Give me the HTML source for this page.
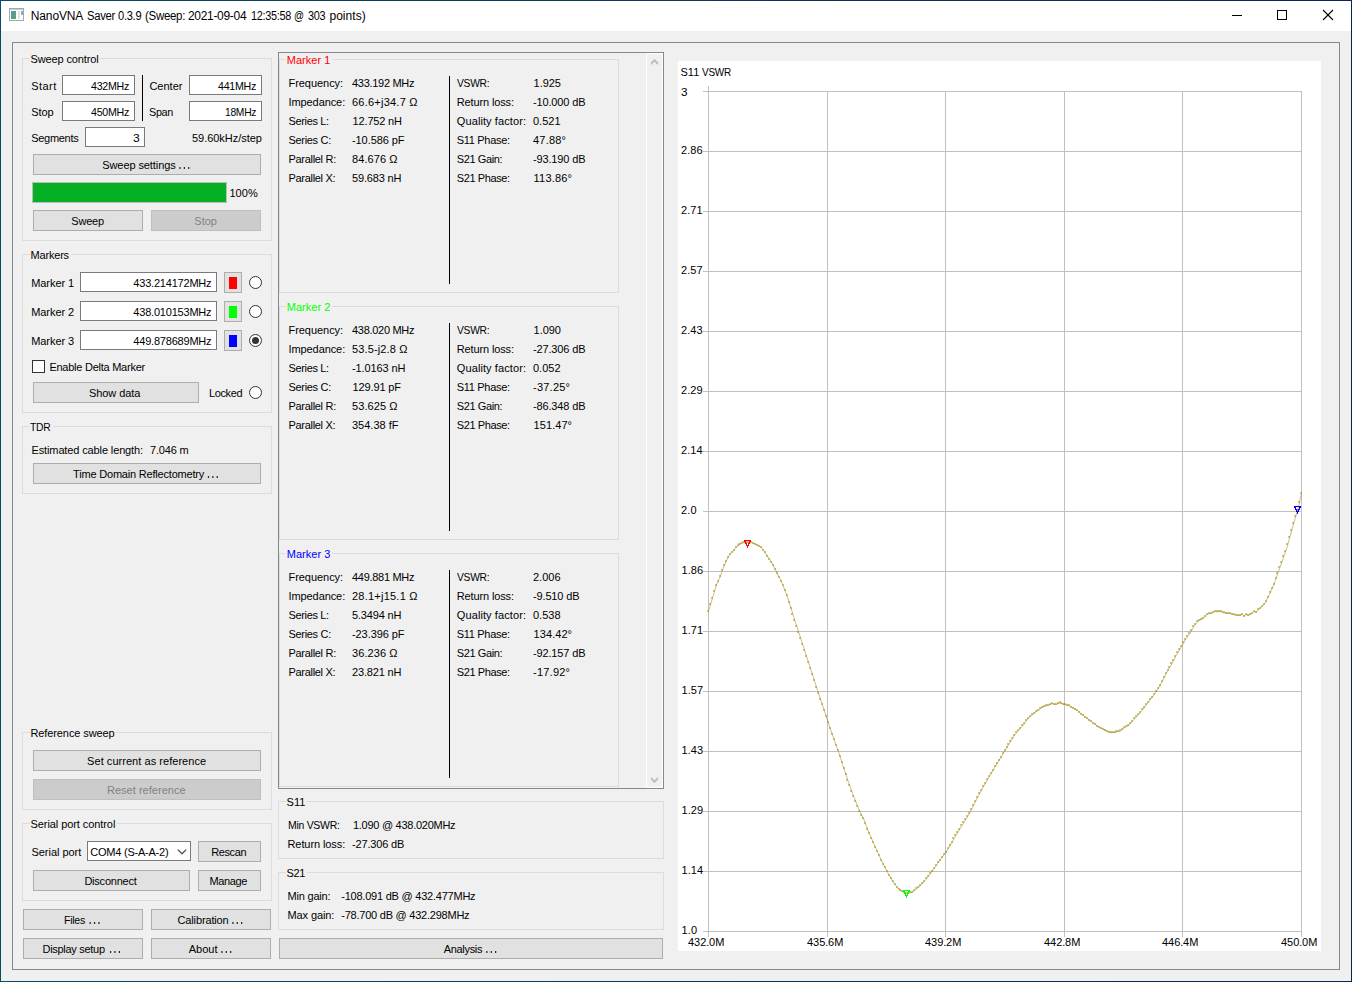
<!DOCTYPE html>
<html><head><meta charset="utf-8"><title>NanoVNA Saver</title>
<style>
html,body{margin:0;padding:0;}
body{width:1352px;height:982px;position:relative;overflow:hidden;background:#f0f0f0;font-family:"Liberation Sans",sans-serif;font-size:11px;color:#000;}
div,span{position:absolute;box-sizing:content-box;}
.t{white-space:pre;line-height:13px;height:13px;transform-origin:0 0;}
.gb{border:1px solid #dcdcdc;}
.gap{background:#f0f0f0;}
.btn{background:#e1e1e1;border:1px solid #adadad;}
.btn.dis{background:#cccccc;border-color:#bfbfbf;}
.inp{background:#fff;border:1px solid #7a7a7a;}
.frame{border:1px solid #828790;}
.rad{width:11px;height:11px;border:1px solid #333;border-radius:50%;background:#fff;}
.vl{background:#000;width:1px;}
svg{position:absolute;left:0;top:0;}

</style></head>
<body>
<div class="" style="left:0px;top:0px;width:1352px;height:1px;background:linear-gradient(to right,#0c4866,#0a2650);"></div>
<div class="" style="left:0px;top:981px;width:1352px;height:1px;background:linear-gradient(to right,#0a4a66,#0a2650);"></div>
<div class="" style="left:0px;top:0px;width:1px;height:982px;background:#0a4a66;"></div>
<div class="" style="left:1351px;top:0px;width:1px;height:982px;background:#0a2650;"></div>
<div class="" style="left:1px;top:1px;width:1350px;height:30px;background:#fff;"></div>
<svg width="40" height="31" viewBox="0 0 40 31"><defs><linearGradient id="ig" x1="0" y1="0" x2="1" y2="1"><stop offset="0" stop-color="#5d8fc4"/><stop offset="1" stop-color="#4fae58"/></linearGradient></defs><rect x="9.5" y="8.5" width="14" height="12" fill="#fff" stroke="#a4a8ae" stroke-width="1"/><rect x="10" y="9" width="13" height="1" fill="#c9ccd1"/><rect x="11" y="11" width="5" height="8" fill="url(#ig)"/><rect x="18" y="11" width="2" height="8" fill="#e4e4e4"/><rect x="21" y="11" width="2" height="4" fill="#7fb0c8"/></svg>
<span class="t " style="left:30.80px;top:10px;letter-spacing:-0.143px;font-size:12px;">NanoVNA</span>
<span class="t " style="left:86.50px;top:10px;letter-spacing:-0.300px;transform:scaleX(0.9353);font-size:12px;">Saver</span>
<span class="t " style="left:117.50px;top:10px;letter-spacing:-0.300px;transform:scaleX(0.9259);font-size:12px;">0.3.9</span>
<span class="t " style="left:144.70px;top:10px;letter-spacing:-0.300px;transform:scaleX(0.9569);font-size:12px;">(Sweep:</span>
<span class="t " style="left:187.90px;top:10px;letter-spacing:-0.298px;font-size:12px;">2021-09-04</span>
<span class="t " style="left:250.60px;top:10px;letter-spacing:-0.300px;transform:scaleX(0.9056);font-size:12px;">12:35:58</span>
<span class="t " style="left:294.40px;top:10px;letter-spacing:0.000px;transform:scaleX(0.8210);font-size:12px;">@</span>
<span class="t " style="left:308.00px;top:10px;letter-spacing:-0.300px;transform:scaleX(0.9063);font-size:12px;">303</span>
<span class="t " style="left:329.40px;top:10px;letter-spacing:0.063px;font-size:12px;">points)</span>
<svg width="1352" height="31" viewBox="0 0 1352 31" shape-rendering="crispEdges"><rect x="1232" y="15" width="10" height="1" fill="#000"/><rect x="1277.5" y="10.5" width="9" height="9" fill="none" stroke="#000" stroke-width="1"/><g shape-rendering="auto" stroke="#000" stroke-width="1.1"><line x1="1323" y1="10" x2="1333" y2="20"/><line x1="1333" y1="10" x2="1323" y2="20"/></g></svg>
<div class="frame" style="left:12px;top:42px;width:1326px;height:926px;"></div>
<div class="gb" style="left:22px;top:58px;width:248px;height:181px;"></div>
<div class="gap" style="left:29.7px;top:56px;width:70.7px;height:5px"></div>
<span class="t " style="left:30.60px;top:53px;letter-spacing:-0.134px;">Sweep control</span>
<span class="t " style="left:31.25px;top:80px;letter-spacing:0.430px;">Start</span>
<div class="inp" style="left:62px;top:75px;width:71px;height:18px;"></div>
<span class="t " style="left:91.40px;top:80px;letter-spacing:-0.300px;transform:scaleX(0.9681);">432MHz</span>
<span class="t " style="left:31.25px;top:106px;letter-spacing:-0.060px;">Stop</span>
<div class="inp" style="left:62px;top:101px;width:71px;height:18px;"></div>
<span class="t " style="left:91.40px;top:106px;letter-spacing:-0.300px;transform:scaleX(0.9681);">450MHz</span>
<div class="vl" style="left:142px;top:75px;width:1px;height:46px;"></div>
<span class="t " style="left:149.40px;top:80px;letter-spacing:0.016px;">Center</span>
<div class="inp" style="left:189px;top:75px;width:71px;height:18px;"></div>
<span class="t " style="left:218.40px;top:80px;letter-spacing:-0.300px;transform:scaleX(0.9681);">441MHz</span>
<span class="t " style="left:149.40px;top:106px;letter-spacing:-0.300px;transform:scaleX(0.9802);">Span</span>
<div class="inp" style="left:189px;top:101px;width:71px;height:18px;"></div>
<span class="t " style="left:225.20px;top:106px;letter-spacing:-0.300px;transform:scaleX(0.9334);">18MHz</span>
<span class="t " style="left:31.25px;top:132px;letter-spacing:-0.297px;">Segments</span>
<div class="inp" style="left:85px;top:127px;width:58px;height:18px;"></div>
<span class="t " style="left:132.88px;top:132px;letter-spacing:0.000px;transform:scaleX(1.0980);">3</span>
<span class="t " style="left:192.00px;top:132px;letter-spacing:-0.039px;">59.60kHz/step</span>
<div class="btn" style="left:33px;top:154px;width:226px;height:19px;"></div>
<span class="t " style="left:102.25px;top:159.0px;letter-spacing:-0.088px;">Sweep settings</span>
<div class="" style="left:32px;top:182px;width:193px;height:19px;background:#06b025;border:1px solid #bcbcbc;"></div>
<span class="t " style="left:229.40px;top:187px;letter-spacing:0.107px;">100%</span>
<div class="btn" style="left:33px;top:210px;width:108px;height:19px;"></div>
<span class="t " style="left:71.30px;top:215.0px;letter-spacing:-0.208px;">Sweep</span>
<div class="btn dis" style="left:151px;top:210px;width:108px;height:19px;"></div>
<span class="t " style="left:194.35px;top:215.0px;letter-spacing:-0.043px;color:#838383;">Stop</span>
<div class="gb" style="left:22px;top:254px;width:248px;height:157px;"></div>
<div class="gap" style="left:29.6px;top:252px;width:41.2px;height:5px"></div>
<span class="t " style="left:30.50px;top:249px;letter-spacing:-0.187px;">Markers</span>
<span class="t " style="left:31.25px;top:277px;letter-spacing:-0.079px;">Marker 1</span>
<div class="inp" style="left:80px;top:272px;width:135px;height:18px;"></div>
<span class="t " style="left:133.30px;top:277px;letter-spacing:-0.202px;">433.214172MHz</span>
<div class="btn" style="left:224px;top:272px;width:16px;height:19px;"></div>
<div class="" style="left:229px;top:277px;width:8px;height:12px;background:#ff0000;"></div>
<div class="rad" style="left:249px;top:276px;width:11px;height:11px;"></div>
<span class="t " style="left:31.25px;top:306px;letter-spacing:-0.079px;">Marker 2</span>
<div class="inp" style="left:80px;top:301px;width:135px;height:18px;"></div>
<span class="t " style="left:133.30px;top:306px;letter-spacing:-0.202px;">438.010153MHz</span>
<div class="btn" style="left:224px;top:301px;width:16px;height:19px;"></div>
<div class="" style="left:229px;top:306px;width:8px;height:12px;background:#00ff00;"></div>
<div class="rad" style="left:249px;top:305px;width:11px;height:11px;"></div>
<span class="t " style="left:31.25px;top:335px;letter-spacing:-0.079px;">Marker 3</span>
<div class="inp" style="left:80px;top:330px;width:135px;height:18px;"></div>
<span class="t " style="left:133.30px;top:335px;letter-spacing:-0.202px;">449.878689MHz</span>
<div class="btn" style="left:224px;top:330px;width:16px;height:19px;"></div>
<div class="" style="left:229px;top:335px;width:8px;height:12px;background:#0000ff;"></div>
<div class="rad" style="left:249px;top:334px;width:11px;height:11px;"></div>
<div class="" style="left:252px;top:337px;width:7px;height:7px;background:#333;border-radius:50%;"></div>
<div class="" style="left:32px;top:360px;width:11px;height:11px;background:#fff;border:1px solid #333;"></div>
<span class="t " style="left:49.40px;top:361px;letter-spacing:-0.248px;">Enable Delta Marker</span>
<div class="btn" style="left:33px;top:382px;width:164px;height:19px;"></div>
<span class="t " style="left:89.00px;top:387.0px;letter-spacing:-0.072px;">Show data</span>
<span class="t " style="left:209.00px;top:387px;letter-spacing:-0.394px;">Locked</span>
<div class="rad" style="left:249px;top:386px;width:11px;height:11px;"></div>
<div class="gb" style="left:22px;top:426px;width:248px;height:66px;"></div>
<div class="gap" style="left:29.4px;top:424px;width:23.2px;height:5px"></div>
<span class="t " style="left:30.30px;top:421px;letter-spacing:-0.300px;transform:scaleX(0.9359);">TDR</span>
<span class="t " style="left:31.50px;top:444px;letter-spacing:-0.125px;">Estimated cable length:</span>
<span class="t " style="left:150.00px;top:444px;letter-spacing:-0.175px;">7.046 m</span>
<div class="btn" style="left:33px;top:463px;width:226px;height:19px;"></div>
<span class="t " style="left:73.10px;top:468.0px;letter-spacing:-0.194px;">Time Domain Reflectometry</span>
<div class="gb" style="left:22px;top:732px;width:248px;height:76px;"></div>
<div class="gap" style="left:29.6px;top:730px;width:86.7px;height:5px"></div>
<span class="t " style="left:30.50px;top:727px;letter-spacing:-0.107px;">Reference sweep</span>
<div class="btn" style="left:33px;top:750px;width:226px;height:19px;"></div>
<span class="t " style="left:87.10px;top:755.0px;letter-spacing:0.043px;">Set current as reference</span>
<div class="btn dis" style="left:33px;top:779px;width:226px;height:19px;"></div>
<span class="t " style="left:106.95px;top:784.0px;letter-spacing:0.031px;color:#838383;">Reset reference</span>
<div class="gb" style="left:22px;top:823px;width:248px;height:76px;"></div>
<div class="gap" style="left:29.6px;top:821px;width:87.5px;height:5px"></div>
<span class="t " style="left:30.50px;top:818px;letter-spacing:-0.076px;">Serial port control</span>
<span class="t " style="left:31.50px;top:846px;letter-spacing:-0.043px;">Serial port</span>
<div class="inp" style="left:87px;top:841px;width:102px;height:18px;"></div>
<span class="t " style="left:90.25px;top:846px;letter-spacing:-0.225px;">COM4 (S-A-A-2)</span>
<svg width="1352" height="982" viewBox="0 0 1352 982"><polyline points="177.8,849.6 182,853.8 186.2,849.6" fill="none" stroke="#4d4d4d" stroke-width="1.25"/></svg>
<div class="btn" style="left:198px;top:841px;width:61px;height:19px;"></div>
<span class="t " style="left:211.20px;top:846.0px;letter-spacing:-0.380px;">Rescan</span>
<div class="btn" style="left:33px;top:870px;width:155px;height:19px;"></div>
<span class="t " style="left:84.40px;top:875.0px;letter-spacing:-0.223px;">Disconnect</span>
<div class="btn" style="left:198px;top:870px;width:61px;height:19px;"></div>
<span class="t " style="left:209.40px;top:875.0px;letter-spacing:-0.330px;">Manage</span>
<div class="btn" style="left:23px;top:909px;width:118px;height:19px;"></div>
<span class="t " style="left:64.40px;top:914.0px;letter-spacing:-0.300px;transform:scaleX(0.9628);">Files</span>
<div class="btn" style="left:151px;top:909px;width:118px;height:19px;"></div>
<span class="t " style="left:177.50px;top:914.0px;letter-spacing:-0.138px;">Calibration</span>
<div class="btn" style="left:23px;top:938px;width:118px;height:19px;"></div>
<span class="t " style="left:42.50px;top:943.0px;letter-spacing:-0.294px;">Display setup</span>
<div class="btn" style="left:151px;top:938px;width:118px;height:19px;"></div>
<span class="t " style="left:188.75px;top:943.0px;letter-spacing:0.000px;">About</span>
<div class="btn" style="left:279px;top:938px;width:382px;height:19px;"></div>
<span class="t " style="left:443.75px;top:943.0px;letter-spacing:-0.316px;">Analysis</span>
<div class="frame" style="left:278px;top:52px;width:384px;height:735px;"></div>
<div class="" style="left:646px;top:53px;width:15px;height:733px;border:1px solid #fff;"></div>
<svg width="1352" height="982" viewBox="0 0 1352 982"><g fill="#b7b7b7"><polygon points="651,65 651,62.6 654.5,59 658,62.6 658,65 654.5,61.6"/><polygon points="651,777 651,779.4 654.5,783 658,779.4 658,777 654.5,780.4"/></g></svg>
<div class="gb" style="left:279px;top:59px;width:338px;height:232px;"></div>
<div class="gap" style="left:285.8px;top:57px;width:46.2px;height:5px"></div>
<span class="t " style="left:286.70px;top:54px;letter-spacing:0.029px;color:#ff0000;">Marker 1</span>
<div class="vl" style="left:449px;top:76px;width:1px;height:208px;"></div>
<span class="t " style="left:288.50px;top:77px;letter-spacing:-0.048px;">Frequency:</span>
<span class="t " style="left:352.00px;top:77px;letter-spacing:-0.293px;">433.192 MHz</span>
<span class="t " style="left:456.80px;top:77px;letter-spacing:-0.300px;transform:scaleX(0.9337);">VSWR:</span>
<span class="t " style="left:533.60px;top:77px;letter-spacing:-0.033px;">1.925</span>
<span class="t " style="left:288.50px;top:96px;letter-spacing:-0.087px;">Impedance:</span>
<span class="t " style="left:352.00px;top:96px;letter-spacing:0.230px;">66.6+j34.7 Ω</span>
<span class="t " style="left:456.80px;top:96px;letter-spacing:-0.135px;">Return loss:</span>
<span class="t " style="left:533.00px;top:96px;letter-spacing:-0.147px;">-10.000 dB</span>
<span class="t " style="left:288.50px;top:115px;letter-spacing:-0.351px;">Series L:</span>
<span class="t " style="left:352.60px;top:115px;letter-spacing:-0.170px;">12.752 nH</span>
<span class="t " style="left:456.80px;top:115px;letter-spacing:0.096px;">Quality factor:</span>
<span class="t " style="left:533.00px;top:115px;letter-spacing:-0.008px;">0.521</span>
<span class="t " style="left:288.50px;top:134px;letter-spacing:-0.317px;">Series C:</span>
<span class="t " style="left:352.00px;top:134px;letter-spacing:-0.078px;">-10.586 pF</span>
<span class="t " style="left:456.80px;top:134px;letter-spacing:-0.318px;">S11 Phase:</span>
<span class="t " style="left:533.00px;top:134px;letter-spacing:0.214px;">47.88°</span>
<span class="t " style="left:288.50px;top:153px;letter-spacing:-0.304px;">Parallel R:</span>
<span class="t " style="left:352.00px;top:153px;letter-spacing:0.083px;">84.676 Ω</span>
<span class="t " style="left:456.80px;top:153px;letter-spacing:-0.403px;">S21 Gain:</span>
<span class="t " style="left:533.00px;top:153px;letter-spacing:-0.147px;">-93.190 dB</span>
<span class="t " style="left:288.50px;top:172px;letter-spacing:-0.303px;">Parallel X:</span>
<span class="t " style="left:352.00px;top:172px;letter-spacing:-0.157px;">59.683 nH</span>
<span class="t " style="left:456.80px;top:172px;letter-spacing:-0.408px;">S21 Phase:</span>
<span class="t " style="left:533.60px;top:172px;letter-spacing:0.195px;">113.86°</span>
<div class="gb" style="left:279px;top:306px;width:338px;height:232px;"></div>
<div class="gap" style="left:285.8px;top:304px;width:46.2px;height:5px"></div>
<span class="t " style="left:286.70px;top:301px;letter-spacing:0.029px;color:#00ff00;">Marker 2</span>
<div class="vl" style="left:449px;top:323px;width:1px;height:208px;"></div>
<span class="t " style="left:288.50px;top:324px;letter-spacing:-0.048px;">Frequency:</span>
<span class="t " style="left:352.00px;top:324px;letter-spacing:-0.293px;">438.020 MHz</span>
<span class="t " style="left:456.80px;top:324px;letter-spacing:-0.300px;transform:scaleX(0.9337);">VSWR:</span>
<span class="t " style="left:533.60px;top:324px;letter-spacing:-0.033px;">1.090</span>
<span class="t " style="left:288.50px;top:343px;letter-spacing:-0.087px;">Impedance:</span>
<span class="t " style="left:352.00px;top:343px;letter-spacing:0.141px;">53.5-j2.8 Ω</span>
<span class="t " style="left:456.80px;top:343px;letter-spacing:-0.135px;">Return loss:</span>
<span class="t " style="left:533.00px;top:343px;letter-spacing:-0.147px;">-27.306 dB</span>
<span class="t " style="left:288.50px;top:362px;letter-spacing:-0.351px;">Series L:</span>
<span class="t " style="left:352.00px;top:362px;letter-spacing:-0.103px;">-1.0163 nH</span>
<span class="t " style="left:456.80px;top:362px;letter-spacing:0.096px;">Quality factor:</span>
<span class="t " style="left:533.00px;top:362px;letter-spacing:-0.008px;">0.052</span>
<span class="t " style="left:288.50px;top:381px;letter-spacing:-0.317px;">Series C:</span>
<span class="t " style="left:352.60px;top:381px;letter-spacing:-0.143px;">129.91 pF</span>
<span class="t " style="left:456.80px;top:381px;letter-spacing:-0.318px;">S11 Phase:</span>
<span class="t " style="left:533.00px;top:381px;letter-spacing:0.235px;">-37.25°</span>
<span class="t " style="left:288.50px;top:400px;letter-spacing:-0.304px;">Parallel R:</span>
<span class="t " style="left:352.00px;top:400px;letter-spacing:0.083px;">53.625 Ω</span>
<span class="t " style="left:456.80px;top:400px;letter-spacing:-0.403px;">S21 Gain:</span>
<span class="t " style="left:533.00px;top:400px;letter-spacing:-0.147px;">-86.348 dB</span>
<span class="t " style="left:288.50px;top:419px;letter-spacing:-0.303px;">Parallel X:</span>
<span class="t " style="left:352.00px;top:419px;letter-spacing:0.003px;">354.38 fF</span>
<span class="t " style="left:456.80px;top:419px;letter-spacing:-0.408px;">S21 Phase:</span>
<span class="t " style="left:533.60px;top:419px;letter-spacing:0.060px;">151.47°</span>
<div class="gb" style="left:279px;top:553px;width:338px;height:232px;"></div>
<div class="gap" style="left:285.8px;top:551px;width:46.2px;height:5px"></div>
<span class="t " style="left:286.70px;top:548px;letter-spacing:0.029px;color:#0000ff;">Marker 3</span>
<div class="vl" style="left:449px;top:570px;width:1px;height:208px;"></div>
<span class="t " style="left:288.50px;top:571px;letter-spacing:-0.048px;">Frequency:</span>
<span class="t " style="left:352.00px;top:571px;letter-spacing:-0.293px;">449.881 MHz</span>
<span class="t " style="left:456.80px;top:571px;letter-spacing:-0.300px;transform:scaleX(0.9337);">VSWR:</span>
<span class="t " style="left:533.00px;top:571px;letter-spacing:-0.008px;">2.006</span>
<span class="t " style="left:288.50px;top:590px;letter-spacing:-0.087px;">Impedance:</span>
<span class="t " style="left:352.00px;top:590px;letter-spacing:0.230px;">28.1+j15.1 Ω</span>
<span class="t " style="left:456.80px;top:590px;letter-spacing:-0.135px;">Return loss:</span>
<span class="t " style="left:533.00px;top:590px;letter-spacing:-0.150px;">-9.510 dB</span>
<span class="t " style="left:288.50px;top:609px;letter-spacing:-0.351px;">Series L:</span>
<span class="t " style="left:352.00px;top:609px;letter-spacing:-0.157px;">5.3494 nH</span>
<span class="t " style="left:456.80px;top:609px;letter-spacing:0.096px;">Quality factor:</span>
<span class="t " style="left:533.00px;top:609px;letter-spacing:-0.008px;">0.538</span>
<span class="t " style="left:288.50px;top:628px;letter-spacing:-0.317px;">Series C:</span>
<span class="t " style="left:352.00px;top:628px;letter-spacing:-0.078px;">-23.396 pF</span>
<span class="t " style="left:456.80px;top:628px;letter-spacing:-0.318px;">S11 Phase:</span>
<span class="t " style="left:533.60px;top:628px;letter-spacing:0.060px;">134.42°</span>
<span class="t " style="left:288.50px;top:647px;letter-spacing:-0.304px;">Parallel R:</span>
<span class="t " style="left:352.00px;top:647px;letter-spacing:0.083px;">36.236 Ω</span>
<span class="t " style="left:456.80px;top:647px;letter-spacing:-0.403px;">S21 Gain:</span>
<span class="t " style="left:533.00px;top:647px;letter-spacing:-0.147px;">-92.157 dB</span>
<span class="t " style="left:288.50px;top:666px;letter-spacing:-0.303px;">Parallel X:</span>
<span class="t " style="left:352.00px;top:666px;letter-spacing:-0.157px;">23.821 nH</span>
<span class="t " style="left:456.80px;top:666px;letter-spacing:-0.408px;">S21 Phase:</span>
<span class="t " style="left:533.00px;top:666px;letter-spacing:0.235px;">-17.92°</span>
<div class="gb" style="left:278px;top:801px;width:384px;height:56px;"></div>
<div class="gap" style="left:285.7px;top:799px;width:21.4px;height:5px"></div>
<span class="t " style="left:286.60px;top:796px;letter-spacing:0.020px;">S11</span>
<span class="t " style="left:287.50px;top:819px;letter-spacing:-0.300px;transform:scaleX(0.9524);">Min VSWR:</span>
<span class="t " style="left:352.90px;top:819px;letter-spacing:-0.263px;">1.090 @ 438.020MHz</span>
<span class="t " style="left:287.50px;top:838px;letter-spacing:-0.090px;">Return loss:</span>
<span class="t " style="left:352.00px;top:838px;letter-spacing:-0.163px;">-27.306 dB</span>
<div class="gb" style="left:278px;top:872px;width:384px;height:56px;"></div>
<div class="gap" style="left:285.7px;top:870px;width:21.4px;height:5px"></div>
<span class="t " style="left:286.60px;top:867px;letter-spacing:-0.385px;">S21</span>
<span class="t " style="left:287.50px;top:890px;letter-spacing:-0.191px;">Min gain:</span>
<span class="t " style="left:341.25px;top:890px;letter-spacing:-0.227px;">-108.091 dB @ 432.477MHz</span>
<span class="t " style="left:287.50px;top:909px;letter-spacing:-0.105px;">Max gain:</span>
<span class="t " style="left:341.25px;top:909px;letter-spacing:-0.233px;">-78.700 dB @ 432.298MHz</span>
<div class="" style="left:678px;top:61px;width:643px;height:890px;background:#fff;"></div>
<span class="t " style="left:680.40px;top:66px;letter-spacing:0.120px;">S11</span>
<span class="t " style="left:701.70px;top:66px;letter-spacing:-0.300px;transform:scaleX(0.9097);">VSWR</span>
<span class="t " style="left:681.00px;top:86px;letter-spacing:0.000px;transform:scaleX(1.0621);">3</span>
<span class="t " style="left:681.00px;top:144px;letter-spacing:0.030px;">2.86</span>
<span class="t " style="left:681.00px;top:204px;letter-spacing:0.030px;">2.71</span>
<span class="t " style="left:681.00px;top:264px;letter-spacing:0.030px;">2.57</span>
<span class="t " style="left:681.00px;top:324px;letter-spacing:0.030px;">2.43</span>
<span class="t " style="left:681.00px;top:384px;letter-spacing:0.030px;">2.29</span>
<span class="t " style="left:681.00px;top:444px;letter-spacing:0.030px;">2.14</span>
<span class="t " style="left:681.00px;top:504px;letter-spacing:0.105px;">2.0</span>
<span class="t " style="left:681.60px;top:564px;letter-spacing:-0.003px;">1.86</span>
<span class="t " style="left:681.60px;top:624px;letter-spacing:-0.003px;">1.71</span>
<span class="t " style="left:681.60px;top:684px;letter-spacing:-0.003px;">1.57</span>
<span class="t " style="left:681.60px;top:744px;letter-spacing:-0.003px;">1.43</span>
<span class="t " style="left:681.60px;top:804px;letter-spacing:-0.003px;">1.29</span>
<span class="t " style="left:681.60px;top:864px;letter-spacing:-0.003px;">1.14</span>
<span class="t " style="left:681.60px;top:924px;letter-spacing:0.055px;">1.0</span>
<span class="t " style="left:688.10px;top:936px;letter-spacing:-0.098px;">432.0M</span>
<span class="t " style="left:807.10px;top:936px;letter-spacing:-0.098px;">435.6M</span>
<span class="t " style="left:925.10px;top:936px;letter-spacing:-0.098px;">439.2M</span>
<span class="t " style="left:1044.10px;top:936px;letter-spacing:-0.098px;">442.8M</span>
<span class="t " style="left:1162.10px;top:936px;letter-spacing:-0.098px;">446.4M</span>
<span class="t " style="left:1281.10px;top:936px;letter-spacing:-0.098px;">450.0M</span>
<svg width="1352" height="982" viewBox="0 0 1352 982"><g shape-rendering="crispEdges" fill="#c0c0c0"><rect x="703" y="91" width="599" height="1"/><rect x="703" y="151" width="599" height="1"/><rect x="703" y="211" width="599" height="1"/><rect x="703" y="271" width="599" height="1"/><rect x="703" y="331" width="599" height="1"/><rect x="703" y="391" width="599" height="1"/><rect x="703" y="451" width="599" height="1"/><rect x="703" y="511" width="599" height="1"/><rect x="703" y="571" width="599" height="1"/><rect x="703" y="631" width="599" height="1"/><rect x="703" y="691" width="599" height="1"/><rect x="703" y="751" width="599" height="1"/><rect x="703" y="811" width="599" height="1"/><rect x="703" y="871" width="599" height="1"/><rect x="703" y="931" width="599" height="1"/><rect x="708" y="86" width="1" height="851"/><rect x="827" y="91" width="1" height="846"/><rect x="945" y="91" width="1" height="846"/><rect x="1064" y="91" width="1" height="846"/><rect x="1182" y="91" width="1" height="846"/><rect x="1301" y="91" width="1" height="846"/></g><polyline points="708.5,611.1 710.5,604.8 712.4,598.5 714.4,591.6 716.4,585.0 718.3,581.1 720.3,576.4 722.2,570.9 724.2,565.9 726.2,561.0 728.1,557.4 730.1,554.0 732.1,552.1 734.0,550.0 736.0,547.7 738.0,545.7 739.9,544.4 741.9,543.4 743.8,542.9 745.8,542.6 747.8,542.4 749.7,542.6 751.7,542.9 753.7,543.3 755.6,544.1 757.6,545.0 759.6,546.4 761.5,547.8 763.5,550.3 765.4,552.9 767.4,556.1 769.4,559.1 771.3,562.0 773.3,565.4 775.3,569.4 777.2,573.4 779.2,577.3 781.2,581.2 783.1,585.8 785.1,590.7 787.0,595.8 789.0,602.0 791.0,608.1 792.9,614.1 794.9,620.5 796.9,626.5 798.8,632.6 800.8,638.6 802.8,644.6 804.7,650.6 806.7,656.6 808.6,662.7 810.6,668.7 812.6,674.8 814.5,680.9 816.5,687.1 818.5,693.1 820.4,699.0 822.4,704.9 824.4,710.8 826.3,716.7 828.3,722.6 830.2,728.4 832.2,734.2 834.2,739.7 836.1,745.2 838.1,750.6 840.1,756.6 842.0,762.7 844.0,768.9 846.0,774.7 847.9,780.3 849.9,785.9 851.8,791.4 853.8,796.5 855.8,801.4 857.7,806.3 859.7,811.2 861.7,815.0 863.6,818.8 865.6,823.9 867.5,829.0 869.5,833.9 871.5,838.3 873.4,842.7 875.4,847.2 877.4,851.5 879.3,855.8 881.3,860.1 883.3,864.0 885.2,867.8 887.2,871.6 889.1,875.0 891.1,878.5 893.1,881.9 895.0,884.5 897.0,887.1 899.0,889.5 900.9,890.7 902.9,891.9 904.9,892.6 906.8,893.2 908.8,893.0 910.7,892.9 912.7,892.0 914.7,890.5 916.6,888.9 918.6,887.2 920.6,885.4 922.5,883.2 924.5,881.0 926.5,878.7 928.4,876.2 930.4,873.7 932.3,871.1 934.3,868.3 936.3,865.5 938.2,862.7 940.2,860.0 942.2,857.4 944.1,854.8 946.1,852.1 948.1,848.8 950.0,845.5 952.0,842.2 953.9,838.9 955.9,835.6 957.9,832.4 959.8,829.1 961.8,825.9 963.8,822.8 965.7,819.7 967.7,816.6 969.7,813.1 971.6,809.5 973.6,805.5 975.5,801.6 977.5,797.7 979.5,793.9 981.4,790.4 983.4,786.9 985.4,783.4 987.3,779.9 989.3,776.5 991.3,773.2 993.2,770.0 995.2,766.8 997.1,763.6 999.1,760.3 1001.1,757.0 1003.0,753.8 1005.0,750.5 1007.0,747.4 1008.9,744.3 1010.9,741.1 1012.9,738.1 1014.8,735.0 1016.8,732.3 1018.7,730.1 1020.7,728.0 1022.7,725.9 1024.6,723.2 1026.6,720.5 1028.6,718.1 1030.5,716.4 1032.5,714.7 1034.5,713.2 1036.4,711.7 1038.4,710.2 1040.3,708.8 1042.3,707.5 1044.3,706.7 1046.2,705.9 1048.2,705.2 1050.2,704.5 1052.1,703.7 1054.1,704.0 1056.1,704.5 1058.0,703.5 1060.0,702.9 1061.9,703.5 1063.9,704.2 1065.9,704.8 1067.8,705.3 1069.8,705.9 1071.8,707.0 1073.7,708.2 1075.7,709.5 1077.7,710.7 1079.6,712.3 1081.6,714.0 1083.5,715.6 1085.5,717.2 1087.5,718.6 1089.4,720.1 1091.4,721.5 1093.4,723.0 1095.3,724.5 1097.3,726.0 1099.3,727.1 1101.2,728.2 1103.2,729.3 1105.1,730.3 1107.1,731.2 1109.1,732.0 1111.0,732.4 1113.0,732.4 1115.0,732.4 1116.9,731.9 1118.9,731.5 1120.9,730.8 1122.8,729.2 1124.8,727.7 1126.7,726.6 1128.7,725.4 1130.7,723.2 1132.6,721.1 1134.6,718.9 1136.6,716.7 1138.5,714.6 1140.5,712.4 1142.5,709.8 1144.4,707.3 1146.4,704.7 1148.3,702.1 1150.3,699.5 1152.3,697.0 1154.2,694.4 1156.2,691.8 1158.2,688.6 1160.1,685.1 1162.1,681.7 1164.0,677.8 1166.0,673.9 1168.0,670.2 1169.9,667.1 1171.9,663.9 1173.9,660.0 1175.8,656.1 1177.8,652.6 1179.8,649.6 1181.7,646.6 1183.7,642.9 1185.6,639.1 1187.6,636.4 1189.6,633.8 1191.5,630.9 1193.5,626.9 1195.5,624.4 1197.4,621.8 1199.4,620.4 1201.4,619.4 1203.3,618.3 1205.3,616.3 1207.2,614.4 1209.2,613.8 1211.2,613.3 1213.1,612.5 1215.1,611.3 1217.1,611.9 1219.0,611.5 1221.0,611.3 1223.0,612.8 1224.9,612.9 1226.9,613.1 1228.8,613.2 1230.8,613.7 1232.8,614.3 1234.7,614.9 1236.7,615.1 1238.7,615.4 1240.6,615.0 1242.6,614.5 1244.6,616.3 1246.5,614.5 1248.5,615.4 1250.4,614.4 1252.4,613.2 1254.4,611.2 1256.3,612.4 1258.3,609.7 1260.3,608.0 1262.2,606.6 1264.2,604.1 1266.2,601.0 1268.1,597.0 1270.1,592.9 1272.0,588.6 1274.0,584.1 1276.0,578.5 1277.9,573.1 1279.9,567.7 1281.9,562.2 1283.8,556.7 1285.8,551.1 1287.8,544.7 1289.7,537.7 1291.7,530.6 1293.6,523.7 1295.6,516.9 1297.6,510.0 1299.5,502.7 1301.5,493.5" fill="none" stroke="rgba(160,140,20,0.55)" stroke-width="1"/><path d="M708.0,610.6h0M710.0,604.3h0M711.9,598.0h0M713.9,591.1h0M715.9,584.5h0M717.8,580.6h0M719.8,575.9h0M721.7,570.4h0M723.7,565.4h0M725.7,560.5h0M727.6,556.9h0M729.6,553.5h0M731.6,551.6h0M733.5,549.5h0M735.5,547.2h0M737.5,545.2h0M739.4,543.9h0M741.4,542.9h0M743.3,542.4h0M745.3,542.1h0M747.3,541.9h0M749.2,542.1h0M751.2,542.4h0M753.2,542.8h0M755.1,543.6h0M757.1,544.5h0M759.1,545.9h0M761.0,547.3h0M763.0,549.8h0M764.9,552.4h0M766.9,555.6h0M768.9,558.6h0M770.8,561.5h0M772.8,564.9h0M774.8,568.9h0M776.7,572.9h0M778.7,576.8h0M780.7,580.7h0M782.6,585.3h0M784.6,590.2h0M786.5,595.3h0M788.5,601.5h0M790.5,607.6h0M792.4,613.6h0M794.4,620.0h0M796.4,626.0h0M798.3,632.1h0M800.3,638.1h0M802.3,644.1h0M804.2,650.1h0M806.2,656.1h0M808.1,662.2h0M810.1,668.2h0M812.1,674.3h0M814.0,680.4h0M816.0,686.6h0M818.0,692.6h0M819.9,698.5h0M821.9,704.4h0M823.9,710.3h0M825.8,716.2h0M827.8,722.1h0M829.7,727.9h0M831.7,733.7h0M833.7,739.2h0M835.6,744.7h0M837.6,750.1h0M839.6,756.1h0M841.5,762.2h0M843.5,768.4h0M845.5,774.2h0M847.4,779.8h0M849.4,785.4h0M851.3,790.9h0M853.3,796.0h0M855.3,800.9h0M857.2,805.8h0M859.2,810.7h0M861.2,814.5h0M863.1,818.3h0M865.1,823.4h0M867.0,828.5h0M869.0,833.4h0M871.0,837.8h0M872.9,842.2h0M874.9,846.7h0M876.9,851.0h0M878.8,855.3h0M880.8,859.6h0M882.8,863.5h0M884.7,867.3h0M886.7,871.1h0M888.6,874.5h0M890.6,878.0h0M892.6,881.4h0M894.5,884.0h0M896.5,886.6h0M898.5,889.0h0M900.4,890.2h0M902.4,891.4h0M904.4,892.1h0M906.3,892.7h0M908.3,892.5h0M910.2,892.4h0M912.2,891.5h0M914.2,890.0h0M916.1,888.4h0M918.1,886.7h0M920.1,884.9h0M922.0,882.7h0M924.0,880.5h0M926.0,878.2h0M927.9,875.7h0M929.9,873.2h0M931.8,870.6h0M933.8,867.8h0M935.8,865.0h0M937.7,862.2h0M939.7,859.5h0M941.7,856.9h0M943.6,854.3h0M945.6,851.6h0M947.6,848.3h0M949.5,845.0h0M951.5,841.7h0M953.4,838.4h0M955.4,835.1h0M957.4,831.9h0M959.3,828.6h0M961.3,825.4h0M963.3,822.3h0M965.2,819.2h0M967.2,816.1h0M969.2,812.6h0M971.1,809.0h0M973.1,805.0h0M975.0,801.1h0M977.0,797.2h0M979.0,793.4h0M980.9,789.9h0M982.9,786.4h0M984.9,782.9h0M986.8,779.4h0M988.8,776.0h0M990.8,772.7h0M992.7,769.5h0M994.7,766.3h0M996.6,763.1h0M998.6,759.8h0M1000.6,756.5h0M1002.5,753.3h0M1004.5,750.0h0M1006.5,746.9h0M1008.4,743.8h0M1010.4,740.6h0M1012.4,737.6h0M1014.3,734.5h0M1016.3,731.8h0M1018.2,729.6h0M1020.2,727.5h0M1022.2,725.4h0M1024.1,722.7h0M1026.1,720.0h0M1028.1,717.6h0M1030.0,715.9h0M1032.0,714.2h0M1034.0,712.7h0M1035.9,711.2h0M1037.9,709.7h0M1039.8,708.3h0M1041.8,707.0h0M1043.8,706.2h0M1045.7,705.4h0M1047.7,704.7h0M1049.7,704.0h0M1051.6,703.2h0M1053.6,703.5h0M1055.6,704.0h0M1057.5,703.0h0M1059.5,702.4h0M1061.4,703.0h0M1063.4,703.7h0M1065.4,704.3h0M1067.3,704.8h0M1069.3,705.4h0M1071.3,706.5h0M1073.2,707.7h0M1075.2,709.0h0M1077.2,710.2h0M1079.1,711.8h0M1081.1,713.5h0M1083.0,715.1h0M1085.0,716.7h0M1087.0,718.1h0M1088.9,719.6h0M1090.9,721.0h0M1092.9,722.5h0M1094.8,724.0h0M1096.8,725.5h0M1098.8,726.6h0M1100.7,727.7h0M1102.7,728.8h0M1104.6,729.8h0M1106.6,730.7h0M1108.6,731.5h0M1110.5,731.9h0M1112.5,731.9h0M1114.5,731.9h0M1116.4,731.4h0M1118.4,731.0h0M1120.4,730.3h0M1122.3,728.7h0M1124.3,727.2h0M1126.2,726.1h0M1128.2,724.9h0M1130.2,722.7h0M1132.1,720.6h0M1134.1,718.4h0M1136.1,716.2h0M1138.0,714.1h0M1140.0,711.9h0M1142.0,709.3h0M1143.9,706.8h0M1145.9,704.2h0M1147.8,701.6h0M1149.8,699.0h0M1151.8,696.5h0M1153.7,693.9h0M1155.7,691.3h0M1157.7,688.1h0M1159.6,684.6h0M1161.6,681.2h0M1163.5,677.3h0M1165.5,673.4h0M1167.5,669.7h0M1169.4,666.6h0M1171.4,663.4h0M1173.4,659.5h0M1175.3,655.6h0M1177.3,652.1h0M1179.3,649.1h0M1181.2,646.1h0M1183.2,642.4h0M1185.1,638.6h0M1187.1,635.9h0M1189.1,633.3h0M1191.0,630.4h0M1193.0,626.4h0M1195.0,623.9h0M1196.9,621.3h0M1198.9,619.9h0M1200.9,618.9h0M1202.8,617.8h0M1204.8,615.8h0M1206.7,613.9h0M1208.7,613.3h0M1210.7,612.8h0M1212.6,612.0h0M1214.6,610.8h0M1216.6,611.4h0M1218.5,611.0h0M1220.5,610.8h0M1222.5,612.3h0M1224.4,612.4h0M1226.4,612.6h0M1228.3,612.7h0M1230.3,613.2h0M1232.3,613.8h0M1234.2,614.4h0M1236.2,614.6h0M1238.2,614.9h0M1240.1,614.5h0M1242.1,614.0h0M1244.1,615.8h0M1246.0,614.0h0M1248.0,614.9h0M1249.9,613.9h0M1251.9,612.7h0M1253.9,610.7h0M1255.8,611.9h0M1257.8,609.2h0M1259.8,607.5h0M1261.7,606.1h0M1263.7,603.6h0M1265.7,600.5h0M1267.6,596.5h0M1269.6,592.4h0M1271.5,588.1h0M1273.5,583.6h0M1275.5,578.0h0M1277.4,572.6h0M1279.4,567.2h0M1281.4,561.7h0M1283.3,556.2h0M1285.3,550.6h0M1287.3,544.2h0M1289.2,537.2h0M1291.2,530.1h0M1293.1,523.2h0M1295.1,516.4h0M1297.1,509.5h0M1299.0,502.2h0M1301.0,493.0h0" fill="none" stroke="rgba(160,140,20,0.5)" stroke-width="2" stroke-linecap="square" shape-rendering="crispEdges"/><polygon points="744.5,540.5 750.5,540.5 747.5,546.5" fill="none" stroke="#ff0000" stroke-width="1" shape-rendering="crispEdges"/><polygon points="903.5,890.5 909.5,890.5 906.5,896.5" fill="none" stroke="#00ff00" stroke-width="1" shape-rendering="crispEdges"/><polygon points="1294.5,506.5 1300.5,506.5 1297.5,512.5" fill="none" stroke="#0000ff" stroke-width="1" shape-rendering="crispEdges"/></svg>
<svg width="1352" height="982" viewBox="0 0 1352 982"><g fill="#000"><rect x="179.35" y="167.20" width="1.3" height="1.6"/><rect x="183.72" y="167.20" width="1.3" height="1.6"/><rect x="188.09" y="167.20" width="1.3" height="1.6"/><rect x="207.85" y="476.20" width="1.3" height="1.6"/><rect x="212.22" y="476.20" width="1.3" height="1.6"/><rect x="216.59" y="476.20" width="1.3" height="1.6"/><rect x="89.55" y="922.20" width="1.3" height="1.6"/><rect x="93.92" y="922.20" width="1.3" height="1.6"/><rect x="98.29" y="922.20" width="1.3" height="1.6"/><rect x="232.25" y="922.20" width="1.3" height="1.6"/><rect x="236.62" y="922.20" width="1.3" height="1.6"/><rect x="240.99" y="922.20" width="1.3" height="1.6"/><rect x="109.95" y="951.20" width="1.3" height="1.6"/><rect x="114.32" y="951.20" width="1.3" height="1.6"/><rect x="118.69" y="951.20" width="1.3" height="1.6"/><rect x="221.25" y="951.20" width="1.3" height="1.6"/><rect x="225.62" y="951.20" width="1.3" height="1.6"/><rect x="229.99" y="951.20" width="1.3" height="1.6"/><rect x="486.25" y="951.20" width="1.3" height="1.6"/><rect x="490.62" y="951.20" width="1.3" height="1.6"/><rect x="494.99" y="951.20" width="1.3" height="1.6"/></g></svg>
</body></html>
